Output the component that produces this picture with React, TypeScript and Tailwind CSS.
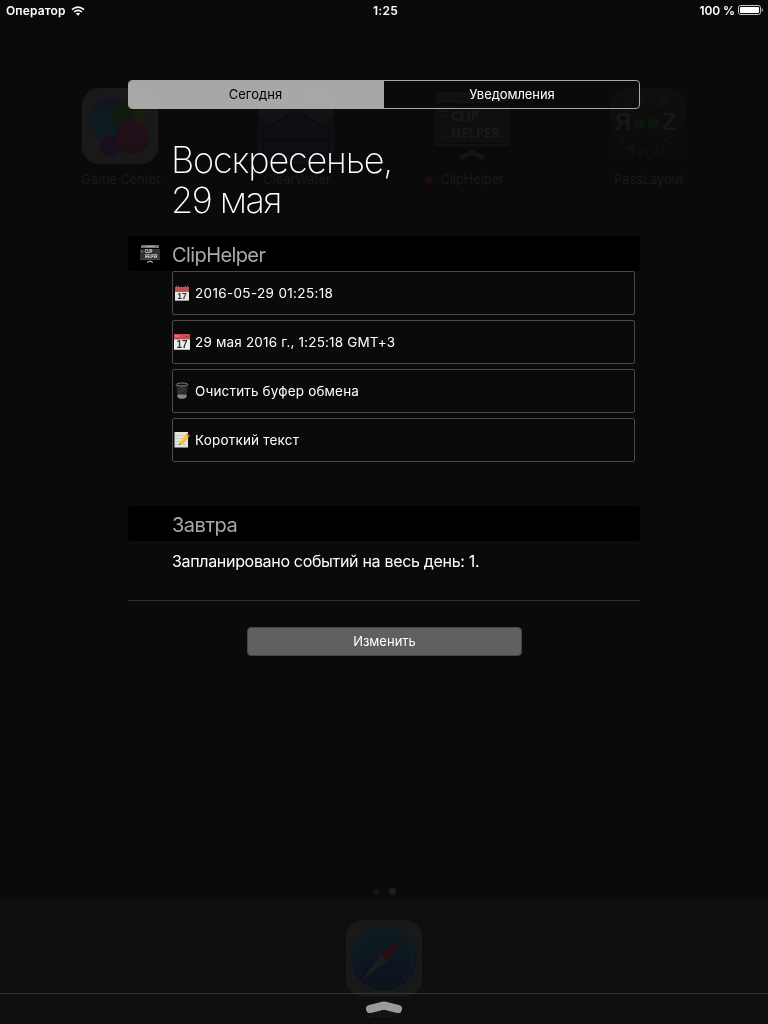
import { ReactNode } from "react";

function GameCenter() {
  return (
    <svg viewBox="0 0 76 76" className="size-[76px]">
      <defs>
        <linearGradient id="bubble" x2="0" y2="1">
          <stop offset="0" stopColor="#12151c" />
          <stop offset=".6" stopColor="#0d1c21" />
          <stop offset="1" stopColor="#0e1a22" />
        </linearGradient>
        <linearGradient id="pink" x2="0" y2="1">
          <stop offset="0" stopColor="#210f1b" />
          <stop offset="1" stopColor="#1e0f12" />
        </linearGradient>
      </defs>
      <rect width="76" height="76" rx="17" fill="#191919" />
      <circle cx="29.500" cy="32" r="23" fill="url(#bubble)" />
      <circle cx="50" cy="27" r="15.500" fill="#1a1b0f" />
      <path d="M30 29A12 12 0 0 1 45 14.500Q54 22 52 33A18 18 0 0 0 36 41 16 16 0 0 1 30 29Z" fill="#101a11" />
      <circle cx="28.500" cy="58" r="10.500" fill="#170f1d" />
      <circle cx="50.500" cy="50" r="16.500" fill="url(#pink)" />
    </svg>
  );
}

function ClearWater() {
  return (
    <svg viewBox="0 0 76 76" className="size-[76px]">
      <defs>
        <linearGradient id="water" x2="0" y2="1">
          <stop offset="0" stopColor="#141415" />
          <stop offset="1" stopColor="#101012" />
        </linearGradient>
      </defs>
      <rect width="76" height="76" rx="17" fill="url(#water)" />
      <path d="M31 0H45V26Q52 33 64 36 71 39 71 46V74H5V46Q5 39 12 36 24 33 31 26Z" fill="#0e0f13" />
      <path d="M0 26 12 36 5 43V60H0ZM76 26 64 36 71 43V60H76Z" fill="#0d0e12" />
      <path d="M31 26C26 34 7 35 5 46V75M45 26C50 34 69 35 71 46V75M5 52H71M5 65H71" fill="none" stroke="#0a0b10" strokeWidth="1.500" />
    </svg>
  );
}

function ClipIcon() {
  return (
    <svg viewBox="0 0 76 76" className="size-[76px] font-['Open_Sans',sans-serif]">
      <path d="M2 15V11Q2 4 9 4H66Q73 4 73 11V15Z" fill="#111111" />
      <rect y="18" width="76" height="37" fill="#0f0f0f" />
      <path d="M0 57H76" stroke="#121212" strokeWidth="2" />
      <path d="M4 23.500H13M6 27.500H12" stroke="#181818" />
      <text x="24" y="13" fontSize="6" fill="#0b0b0b">Widget</text>
      <text x="17" y="33" fontSize="14" fontWeight="700" fill="#1a1a1a" textLength="28" lengthAdjust="spacingAndGlyphs">CLIP</text>
      <text x="17" y="50" fontSize="14" fontWeight="700" fill="#1a1a1a" textLength="49" lengthAdjust="spacingAndGlyphs">HELPER</text>
      <path d="M28 69 38 64.500 48 69" fill="none" stroke="#161616" strokeWidth="4.500" strokeLinecap="round" />
    </svg>
  );
}

function PassIcon() {
  return (
    <svg viewBox="0 0 76 76" className="size-[76px] font-['Liberation_Sans',sans-serif]">
      <defs>
        <linearGradient id="pass" x2="0" y2="1">
          <stop offset="0" stopColor="#0f0f0f" />
          <stop offset="1" stopColor="#0a0a0a" />
        </linearGradient>
        <path id="arcTop" d="M16 23Q37 8 62 23" />
        <path id="arcBottom" d="M7 50Q36 92 72 46" />
      </defs>
      <rect width="76" height="76" rx="17" fill="url(#pass)" />
      <text x="3" fontSize="13" fill="#151715" letterSpacing="1.500"><textPath href="#arcTop">PASS</textPath></text>
      <text x="5" y="42" fontSize="24" fontWeight="700" fill="#171717" textLength="16" lengthAdjust="spacingAndGlyphs">Я</text>
      <text x="52" y="42" fontSize="24" fontWeight="700" fill="#171717">Z</text>
      <circle cx="29.500" cy="35" r="5.800" fill="#0d160d" />
      <circle cx="43.500" cy="35" r="5.800" fill="#0d160d" />
      <text x="4" fontSize="13" fill="#0e170f" letterSpacing="3"><textPath href="#arcBottom">LAYOUT</textPath></text>
    </svg>
  );
}

function SafariIcon() {
  return (
    <svg viewBox="0 0 76 76" className="size-[76px]">
      <defs>
        <linearGradient id="sea" x2="0" y2="1">
          <stop offset="0" stopColor="#0e1c1e" />
          <stop offset=".5" stopColor="#0c1720" />
          <stop offset="1" stopColor="#0b101d" />
        </linearGradient>
      </defs>
      <rect width="76" height="76" rx="17" fill="#191919" />
      <circle cx="38" cy="38" r="32.500" fill="url(#sea)" />
      <circle cx="38" cy="38" r="29" fill="none" stroke="#152123" strokeWidth="4" strokeDasharray=".8 2.240" />
      <path d="M60 16 41 41 35 35Z" fill="#260e0e" />
      <path d="M16 60 35 35 41 41Z" fill="#1d1d1d" />
    </svg>
  );
}

function MiniClip() {
  return (
    <svg viewBox="0 0 20 20" className="size-5 font-['Open_Sans',sans-serif]">
      <path d="M1 4V2Q1 1 2 1H18Q19 1 19 2V4Z" fill="#777" />
      <path d="M6 2.500H14" stroke="#aaa" />
      <rect y="5" width="20" height="11" fill="#333" />
      <path d="M0 15.500H20" stroke="#474747" />
      <path d="M1 7.500H3" stroke="#777" />
      <text x="5" y="9.300" fontSize="4.500" fontWeight="800" fill="#ccc" textLength="7.500" lengthAdjust="spacingAndGlyphs">CLIP</text>
      <text x="5" y="13.700" fontSize="4.500" fontWeight="800" fill="#ccc" textLength="12.500" lengthAdjust="spacingAndGlyphs">HELPER</text>
      <path d="M7.500 18.300 10 17.200 12.500 18.300" fill="none" stroke="#aaa" strokeWidth="1.200" strokeLinecap="round" />
    </svg>
  );
}

function SpiralCalendar() {
  return (
    <svg viewBox="0 0 16 16" className="size-4 font-['Liberation_Sans',sans-serif]">
      <rect x="1" y="2" width="14" height="14" fill="#e7e7e7" />
      <path d="M1 2H15V7H1Z" fill="#c34f4f" />
      <path d="M1 15.500H15" stroke="#999" />
      <path d="M2.500 .5V4M4.500 .5V4M11.500 .5V4M13.500 .5V4" stroke="#777" strokeWidth=".8" />
      <text x="8" y="13.700" textAnchor="middle" fontSize="8.500" fontWeight="700" fill="#333">17</text>
    </svg>
  );
}

function Calendar() {
  return (
    <svg viewBox="0 0 16 16" className="size-4 font-['Liberation_Sans',sans-serif]">
      <rect width="16" height="16" fill="#eee" />
      <path d="M0 0H16V5.500H0Z" fill="#d04b49" />
      <path d="M1 2H5" stroke="#e6a09f" />
      <path d="M3 4.500H4M12 2.500H13.500" stroke="#733" />
      <path d="M0 15.500H16" stroke="#bbb" />
      <text x="8" y="13.800" textAnchor="middle" fontSize="10" fontWeight="700" fill="#333">17</text>
    </svg>
  );
}

function Basket() {
  return (
    <svg viewBox="0 0 16 18" className="h-[18px] w-4">
      <path d="M2 2.500 3.700 15.500Q8 18.500 12.300 15.500L14 2.500Z" fill="#262626" />
      <path d="M3.300 12.500H12.700L12.300 15.500Q8 18 3.700 15.500Z" fill="#858585" />
      <ellipse cx="8" cy="2.500" rx="5.800" ry="1.500" fill="#111" stroke="#999" strokeWidth=".8" />
      <path d="M4 6 12 11M4 9 10 14M12 6 4 11M6 5 13 9" stroke="#555" strokeWidth=".4" />
    </svg>
  );
}

function Memo() {
  return (
    <svg viewBox="0 0 16 16" className="size-4">
      <rect x=".5" width="13.500" height="15.500" fill="#e5e3dd" />
      <path d="M1 3.500H12M1 6.500H12M1 9.500H12M1 12.500H12" stroke="#bbb" strokeWidth=".7" />
      <path d="M5 13 6 9 12 2.500 15 5 8.500 11.800Z" fill="#efbd29" />
      <path d="M6.500 10 13 3.300" stroke="#ffe465" />
      <path d="M12.300 2.500 13.500 1.300 16 3.800 15 5Z" fill="#df4b40" />
      <path d="M5 13 5.400 11.500 6.500 12.500Z" fill="#333" />
    </svg>
  );
}

function HomeApp({ icon, label, dot }: { icon: ReactNode; label: ReactNode; dot?: boolean }) {
  return (
    <div className="flex w-44 flex-col items-center">
      {icon}
      <div className="relative mt-1.5 flex h-5 items-center text-[13px] text-[#191919]">
        {dot && <span className="absolute top-1.5 -left-[15px] size-2 rounded-full bg-[#1a0d0a]" />}
        {label}
      </div>
    </div>
  );
}

function HomeScreen() {
  return (
    <div className="flex h-[1024px] w-[768px] flex-col bg-[#0a0a0a]">
      <div className="flex px-8 pt-[88px]">
        <HomeApp icon={<GameCenter />} label={<span className="pl-0.5 tracking-[-0.01em]">Game Center</span>} />
        <HomeApp icon={<ClearWater />} label={<span className="pl-0.5 tracking-[-0.01em]">ClearWater</span>} />
        <HomeApp icon={<ClipIcon />} label={<span className="tracking-[-0.01em]">ClipHelper</span>} dot />
        <HomeApp icon={<PassIcon />} label={<span className="pl-px tracking-[-0.015em]">PassLayout</span>} />
      </div>
      <div className="mt-auto flex items-center justify-center gap-[9px] pb-[5px]">
        <span className="size-[7px] rounded-full bg-[#131313]" />
        <span className="size-[7px] rounded-full bg-[#1e1e1e]" />
      </div>
      <div className="flex h-[124px] flex-col items-center bg-[#0f0f0f] pt-5">
        <SafariIcon />
        <span className="mt-1.5 text-[13px] leading-5 text-[#1c1c1c]">Safari</span>
      </div>
    </div>
  );
}

function StatusBar() {
  return (
    <div className="grid h-[22px] grid-cols-3 items-center pr-[5px] pl-1.5 text-[12px] font-semibold">
      <div className="flex items-center gap-[5px]">
        <span className="tracking-[0.01em]">Оператор</span>
        <svg viewBox="0 0 14 10" className="h-2.5 w-3.5" fill="none" stroke="#fff" strokeWidth="1.600">
          <path d="M1 3.700Q7-1.500 13 3.700M3.100 6Q7 2.700 10.900 6" />
          <path d="M4.900 7.600Q7 6 9.100 7.600L7 9.700Z" fill="#fff" stroke="none" />
        </svg>
      </div>
      <span className="pl-0.5 text-center tracking-[0.02em]">1:25</span>
      <div className="flex items-center justify-end gap-[3px]">
        <span className="tracking-[-0.01em]">100 %</span>
        <svg viewBox="0 0 25 10" className="mb-0.5 h-2.5 w-[25px]">
          <rect x=".5" y=".5" width="22" height="9" rx="2" fill="none" stroke="#c9c9c9" />
          <rect x="2" y="2" width="19" height="6" rx=".7" fill="#fff" />
          <path d="M23.800 3.200Q25 3.500 25 5 25 6.500 23.800 6.800Z" fill="#c9c9c9" />
        </svg>
      </div>
    </div>
  );
}

function Row({ icon, children }: { icon: ReactNode; children: ReactNode }) {
  return (
    <div className="flex h-11 items-center gap-[5px] rounded-[2px] border border-[#4a4a4a] pl-px text-[13.5px]">
      {icon}
      <div className="pt-px">{children}</div>
    </div>
  );
}

export default function App() {
  return (
    <div className="relative h-[1024px] w-[768px] overflow-hidden bg-[#0a0a0a] font-['Inter','Noto_Sans',sans-serif] text-white antialiased">
      <HomeScreen />
      <div className="absolute inset-0 flex flex-col will-change-transform">
        <StatusBar />
        <main className="mx-auto mt-[58px] flex w-lg flex-col">
          <div className="flex h-[29px] overflow-hidden rounded-[4px] border border-[#b0b0b0]/95 text-[13px]">
            <div className="flex w-[255px] items-center justify-center bg-[#b0b0b0]/95 pr-0.5 text-black">
              <span>Сегодня</span>
            </div>
            <div className="flex flex-1 items-center justify-center pl-px">
              <span className="tracking-[-0.005em]">Уведомления</span>
            </div>
          </div>
          <h1 className="mt-[31px] ml-[43px] text-[36px] leading-10 font-[150] tracking-[-0.032em]">
            <span className="block">Воскресенье,</span>
            <span className="block tracking-[-0.042em]">29 мая</span>
          </h1>
          <div className="mt-4 flex h-[35px] items-center rounded-[4px] bg-black pt-[3px] pl-3 text-[#a9a9a9]">
            <div className="-mt-[3px] w-8"><MiniClip /></div>
            <h2 className="text-[20px] tracking-[-0.03em]">ClipHelper</h2>
          </div>
          <div className="mr-[5px] ml-11 flex flex-col gap-[5px]">
            <Row icon={<SpiralCalendar />}><span className="tracking-[0.025em]">2016-05-29 01:25:18</span></Row>
            <Row icon={<Calendar />}><span className="tracking-[0.013em]">29 мая 2016 г., 1:25:18 GMT+3</span></Row>
            <Row icon={<Basket />}><span className="tracking-[0.012em]">Очистить буфер обмена</span></Row>
            <Row icon={<Memo />}><span className="tracking-[0.014em]">Короткий текст</span></Row>
          </div>
          <div className="mt-11 flex h-[35px] items-center rounded-[4px] bg-black pt-[3px] pl-11 text-[#a9a9a9]">
            <h2 className="text-[20px] tracking-[-0.025em]">Завтра</h2>
          </div>
          <p className="mt-2.5 ml-11 text-[16px] leading-5 tracking-[-0.02em]">Запланировано событий на весь день: 1.</p>
          <div className="mt-[29px] h-px bg-[#303030]" />
          <button className="mt-[26px] ml-[119px] h-[29px] w-[275px] rounded-[4px] border border-[#444] bg-[#606060] text-[13px]">
            <span>Изменить</span>
          </button>
        </main>
        <footer className="mt-auto flex h-[31px] justify-center border-t border-[#343434] pt-[7px]">
          <svg viewBox="0 0 36 13" className="h-[13px] w-9">
            <path d="M4 8 18 4.500 32 8" fill="none" stroke="#9b9b9b" strokeWidth="8" strokeLinecap="round" strokeLinejoin="round" />
          </svg>
        </footer>
      </div>
    </div>
  );
}
